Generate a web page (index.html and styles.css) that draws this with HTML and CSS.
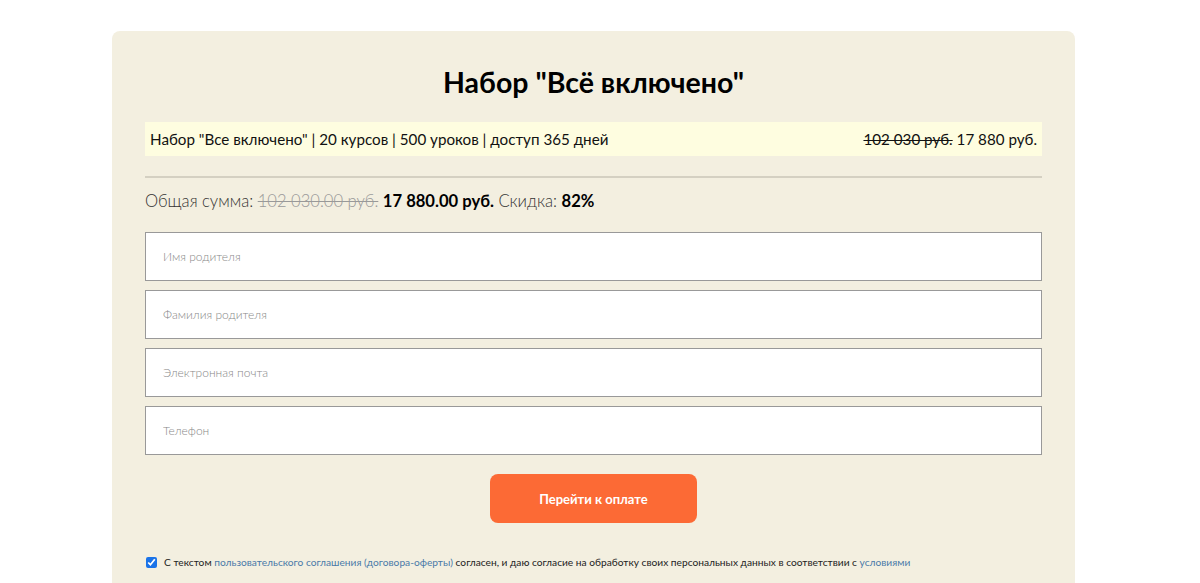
FILE: index.html
```html
<!doctype html>
<html lang="ru">
<head>
<title>Набор "Всё включено"</title>
<meta charset="UTF-8">
<link rel="stylesheet" href="styles.css">
</head>
<body>
    <div class="order">
        <h1 class="order-title">Набор "Всё включено"</h1>
        <div class="product">
            <span class="product-name">Набор "Все включено" | 20 курсов | 500 уроков | доступ 365 дней</span>
            <span class="product-price"><s>102 030 руб.</s> 17 880 руб.</span>
        </div>
        <div class="total">
            Общая сумма: <s class="old">102 030.00 руб.</s> <b>17 880.00 руб.</b> Скидка: <b>82%</b>
        </div>
        <form class="form">
            <input class="field" type="text" placeholder="Имя родителя">
            <input class="field" type="text" placeholder="Фамилия родителя">
            <input class="field" type="email" placeholder="Электронная почта">
            <input class="field" type="tel" placeholder="Телефон">
            <button class="pay" type="button">Перейти к оплате</button>
            <label class="agree">
                <input type="checkbox" checked>
                <span>С текстом <a href="#">пользовательского соглашения (договора-оферты)</a> согласен, и даю согласие на обработку своих персональных данных в соответствии с <a href="#">условиями</a></span>
            </label>
        </form>
    </div>
</body>
</html>
```

FILE: styles.css
```css
html,body{margin:0;padding:0;background:#fff;}
body{font-family:"Lato","Noto Sans",sans-serif;color:#111;padding-right:13px;}
.order{width:897px;margin:31px auto 0;padding:33px 33px 40px;background:#f3efe0;border-radius:8px;min-height:500px;}
.order-title{margin:0 0 22px;text-align:center;font-size:28.5px;font-weight:700;line-height:36px;color:#000;}
.product{display:flex;justify-content:space-between;align-items:center;height:34px;padding:0 5px;background:#fefde0;font-size:15.2px;color:#111;}
.product s{text-decoration-thickness:1px;}
.total{border-top:2px solid #d4d0c2;margin-top:20px;padding-top:11px;font-size:16.6px;line-height:24px;color:#333;font-weight:300;}
.total b{font-weight:700;color:#000;}
.total .old{color:#999;}
.form{display:flex;flex-direction:column;margin-top:19px;}
.field{box-sizing:border-box;height:49px;margin:0 0 9px;padding:0 17px;border:1px solid #999;background:#fff;font-family:inherit;font-size:12px;outline:none;}
.field::placeholder{color:#888;font-weight:300;}
.pay{align-self:center;width:207px;height:49px;margin-top:10px;border:0;border-radius:8px;background:#fc6a35;color:#fff;font-family:inherit;font-size:13px;font-weight:700;cursor:pointer;}
.agree{display:flex;align-items:center;gap:4px;margin-top:33px;font-size:10.2px;color:#222;}
.agree input{margin:0 3px 0 1px;width:11px;height:11px;accent-color:#1a73e8;}
.agree a{color:#4a7aa8;text-decoration:none;}
```
